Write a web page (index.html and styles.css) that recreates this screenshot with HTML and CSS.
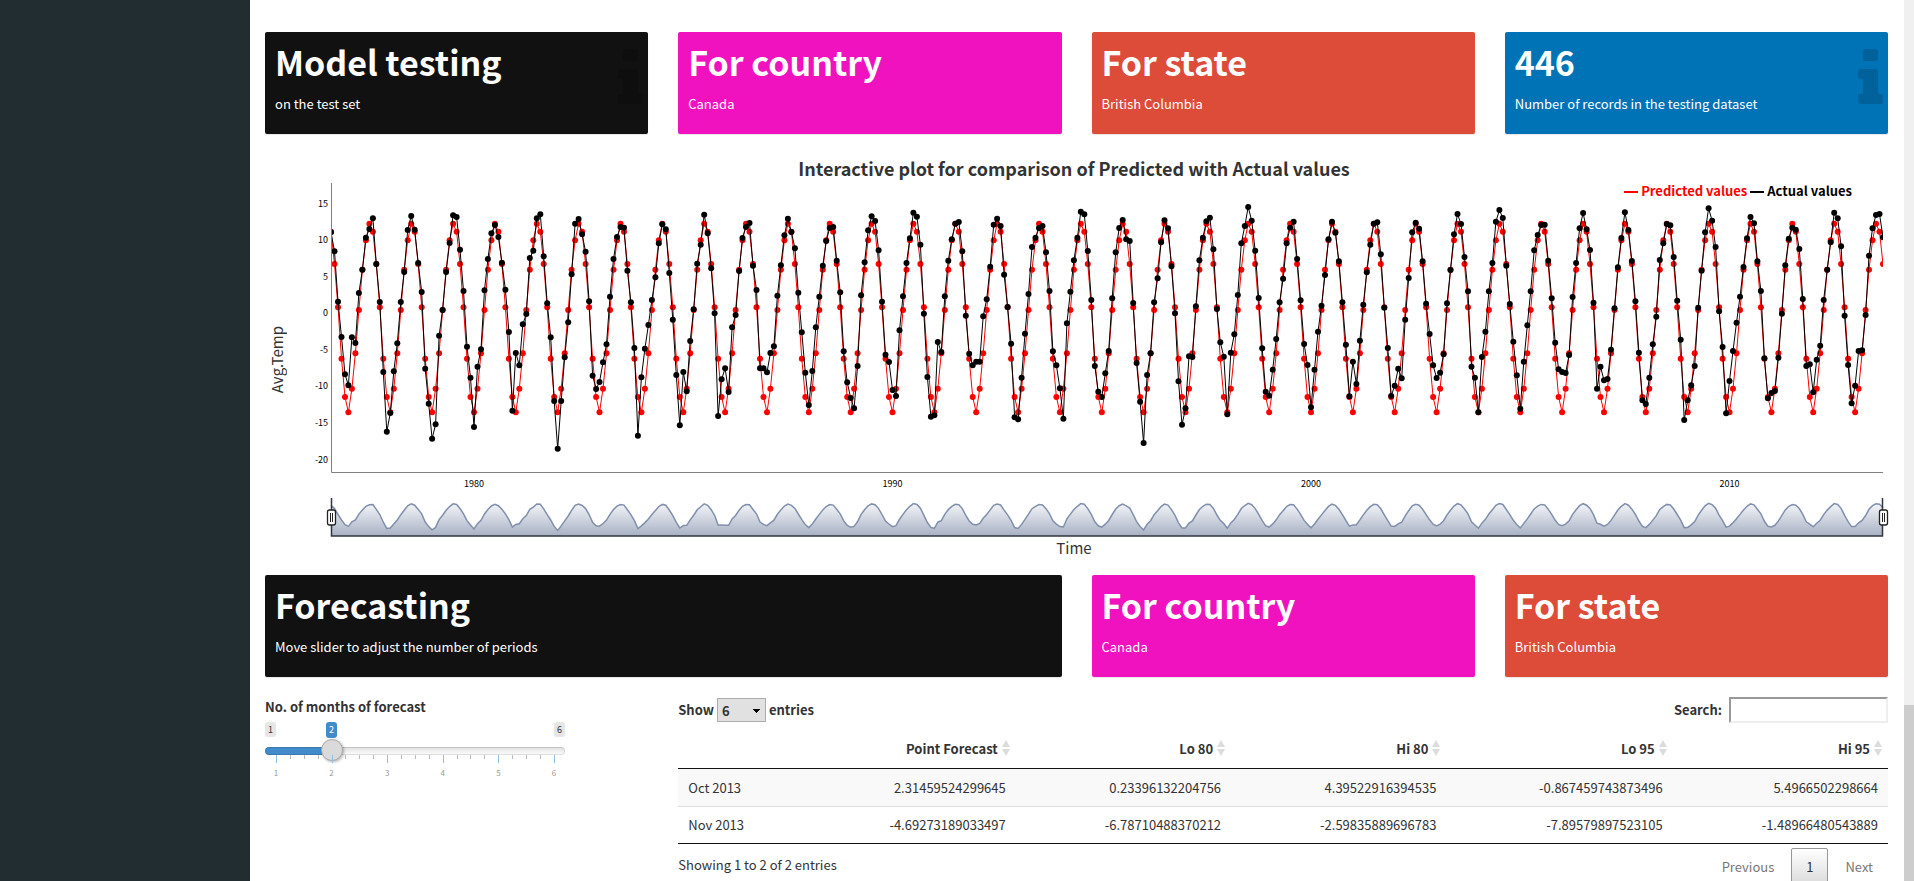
FILE: index.html
```html
<!DOCTYPE html>
<html lang="en">
<head>
<meta charset="utf-8">
<title>Temperature forecasting</title>
<link rel="stylesheet" href="styles.css">
</head>
<body>
<aside class="sidebar"></aside>
<main class="content">
  <section class="boxes">
    <div class="box box-black">
      <h3>Model testing</h3><p>on the test set</p>
      <svg class="box-icon" viewBox="0 0 25 55"><path d="M7 0h11q2 0 2 2v8q0 2-2 2H7q-2 0-2-2V2q0-2 2-2zM2 20h16q2 0 2 2v23h3q2 0 2 2v6q0 2-2 2H2q-2 0-2-2v-6q0-2 2-2h3V30H2q-2 0-2-2v-6q0-2 2-2z"/></svg>
    </div>
    <div class="box box-pink"><h3>For country</h3><p>Canada</p></div>
    <div class="box box-red"><h3>For state</h3><p>British Columbia</p></div>
    <div class="box box-blue">
      <h3>446</h3><p>Number of records in the testing dataset</p>
      <svg class="box-icon" viewBox="0 0 25 55"><path d="M7 0h11q2 0 2 2v8q0 2-2 2H7q-2 0-2-2V2q0-2 2-2zM2 20h16q2 0 2 2v23h3q2 0 2 2v6q0 2-2 2H2q-2 0-2-2v-6q0-2 2-2h3V30H2q-2 0-2-2v-6q0-2 2-2z"/></svg>
    </div>
  </section>

  <section class="chart">
    <h4 class="chart-title">Interactive plot for comparison of Predicted with Actual values</h4>
    <div class="chart-ylabel"><span>Avg.Temp</span></div>
    <div class="chart-plot" id="plot"></div>
    <div class="chart-legend"><span class="key key-red"></span><span class="name-red">Predicted values</span><span class="key key-black"></span><span>Actual values</span></div>
    <div class="chart-xlabel">Time</div>
  </section>

  <section class="boxes">
    <div class="box box-black box-wide"><h3>Forecasting</h3><p>Move slider to adjust the number of periods</p></div>
    <div class="box box-pink"><h3>For country</h3><p>Canada</p></div>
    <div class="box box-red"><h3>For state</h3><p>British Columbia</p></div>
  </section>

  <section class="forecast">
    <div class="periods">
      <label for="months">No. of months of forecast</label>
      <div class="bounds"><span>1</span><output class="current" for="months">2</output><span>6</span></div>
      <input type="range" id="months" min="1" max="6" step="1" value="2">
      <div class="ticks" id="ticks"></div>
      <div class="tick-names"><span>1</span><span>2</span><span>3</span><span>4</span><span>5</span><span>6</span></div>
    </div>
    <div class="table-wrap">
      <div class="table-tools">
        <label class="length">Show <select><option>6</option><option>12</option></select> entries</label>
        <label class="search">Search: <input type="search"></label>
      </div>
      <table>
        <colgroup><col class="c-name"><col class="c-a"><col class="c-b"><col class="c-b"><col class="c-c"><col class="c-b"></colgroup>
        <thead><tr><th></th><th>Point Forecast</th><th>Lo 80</th><th>Hi 80</th><th>Lo 95</th><th>Hi 95</th></tr></thead>
        <tbody>
          <tr><td>Oct 2013</td><td>2.31459524299645</td><td>0.23396132204756</td><td>4.39522916394535</td><td>-0.867459743873496</td><td>5.4966502298664</td></tr>
          <tr><td>Nov 2013</td><td>-4.69273189033497</td><td>-6.78710488370212</td><td>-2.59835889696783</td><td>-7.89579897523105</td><td>-1.48966480543889</td></tr>
        </tbody>
      </table>
      <div class="table-foot">
        <span>Showing 1 to 2 of 2 entries</span>
        <nav class="pages"><button type="button">Previous</button><button type="button" class="on">1</button><button type="button">Next</button></nav>
      </div>
    </div>
  </section>
</main>
<div class="scrollbar"><div class="thumb"></div></div>
<script src="chart.js"></script>
</body>
</html>
```

FILE: styles.css
```css
* { box-sizing: border-box; }
body {
  margin: 0;
  display: flex;
  height: 100vh;
  overflow: hidden;
  background: #fff;
  color: #333;
  font: 13px/20px "Noto Sans CJK SC", "Open Sans", sans-serif;
}
h3, h4, p { margin: 0; }
.sidebar { flex: 0 0 250px; background: #222d32; }
.content { flex: 1; min-width: 0; padding: 32px 16px 0 15px; overflow: hidden; }
.scrollbar { flex: 0 0 10px; background: #f0f0f0; display: flex; align-items: flex-end; }
.thumb { width: 100%; height: 20%; background: #cdcdcd; }

.boxes { display: grid; grid-template-columns: repeat(4, minmax(0, 1fr)); gap: 30px; }
.box {
  position: relative;
  height: 102px;
  padding: 10px;
  border-radius: 2px;
  color: #fff;
  box-shadow: 0 1px 1px rgba(0, 0, 0, .1);
}
.box h3 { margin-bottom: 11px; font-size: 34px; line-height: 40px; font-weight: bold; white-space: nowrap; }
.box p { font-size: 13px; line-height: 21px; }
.box-wide { grid-column: span 2; }
.box-black { background: #111; }
.box-pink { background: #f012be; }
.box-red { background: #dd4b39; }
.box-blue { background: #0073b7; }
.box-icon { position: absolute; right: 5px; top: 17px; width: 25px; height: 55px; fill: rgba(0, 0, 0, .15); }

.chart {
  position: relative;
  display: grid;
  grid-template: 28px 354px 24px / 24px 1fr;
  margin: 21px 0 14px;
  padding-right: 5px;
}
.chart-title { grid-column: 1 / 3; font-size: 18px; line-height: 26px; text-align: center; font-weight: bold; }
.chart-ylabel { display: flex; align-items: center; justify-content: center; }
.chart-ylabel span { writing-mode: vertical-rl; transform: rotate(180deg); font-size: 15px; line-height: 24px; }
.chart-plot { min-width: 0; }
.chart-plot svg { display: block; overflow: visible; }
.chart-plot text { font-size: 9px; fill: #000; }
.chart-xlabel { grid-column: 1 / 3; text-align: center; font-size: 15px; line-height: 22px; }
.chart-legend {
  position: absolute;
  right: 36px;
  top: 26px;
  display: flex;
  align-items: center;
  font-weight: bold;
  color: #000;
}
.key { width: 14px; height: 2px; margin: 2px 3px 0; }
.key-red { background: #f00; }
.key-black { background: #000; }
.name-red { color: #f00; }

.forecast { display: grid; grid-template-columns: repeat(4, minmax(0, 1fr)); gap: 30px; padding-top: 20px; }
.periods { width: 300px; }
.periods label { display: block; font-weight: bold; line-height: 20px; margin-bottom: 5px; }
.bounds { position: relative; display: flex; justify-content: space-between; font-size: 9px; line-height: 15px; }
.bounds span { width: 11px; text-align: center; background: #e6e6e6; border-radius: 3px; }
.current { position: absolute; left: 61px; top: 0; width: 11px; height: 16px; text-align: center; color: #fff; background: #428bca; border-radius: 3px; }
#months { -webkit-appearance: none; appearance: none; display: block; width: 100%; height: 22px; margin: 3px 0 0; background: none; }
#months::-webkit-slider-runnable-track {
  height: 8px;
  border-radius: 8px;
  background: linear-gradient(90deg, #428bca 22%, transparent 22%), linear-gradient(#dedede, #fff);
  box-shadow: inset 0 0 0 1px rgba(0, 0, 0, .12);
}
#months::-webkit-slider-thumb {
  -webkit-appearance: none;
  width: 22px;
  height: 22px;
  margin-top: -8px;
  border: 1px solid #aaa;
  border-radius: 50%;
  background: #dadada;
  box-shadow: 1px 1px 3px rgba(0, 0, 0, .3);
}
.ticks { display: flex; justify-content: space-between; height: 8px; margin: -7px 11px 0; }
.ticks i { width: 1px; height: 4px; margin-right: -1px; background: #bbb; }
.ticks i.major { height: 8px; background: #99bfdf; }
.tick-names { display: flex; justify-content: space-between; margin: 2px 6px 0; font-size: 8px; line-height: 16px; color: #999; }
.tick-names span { width: 10px; text-align: center; }

.table-wrap { grid-column: 2 / 5; }
.table-tools { display: flex; justify-content: space-between; font-weight: bold; height: 32px; }
.table-tools label { display: flex; align-items: center; height: 26px; gap: 3px; }
.table-tools select {
  -webkit-appearance: none;
  appearance: none;
  width: 49px;
  height: 24px;
  padding: 0 4px;
  border: 1px solid #adadad;
  border-radius: 0;
  background: linear-gradient(to bottom left, #000 50%, transparent 50%) 35px 10px / 4px 4px no-repeat, linear-gradient(to bottom right, #000 50%, transparent 50%) 39px 10px / 4px 4px no-repeat, #e1e1e1;
  color: #333;
  font: bold 13px "Noto Sans CJK SC", "Open Sans", sans-serif;
}
.table-tools .search { gap: 7px; }
.table-tools input { width: 159px; height: 26px; border: 2px solid; border-color: #999 #eee #eee #999; border-radius: 0; background: #fff; }
table { width: 100%; border-collapse: separate; border-spacing: 0; table-layout: fixed; border-bottom: 1px solid #111; }
.c-name { width: 10.3%; }
.c-a { width: 17.6%; }
.c-b { width: 17.8%; }
.c-c { width: 18.7%; }
th, td { text-align: right; white-space: nowrap; }
th { position: relative; height: 40px; padding: 0 18px 0 0; border-bottom: 1px solid #111; font-weight: bold; }
th:not(:first-child)::before, th:not(:first-child)::after { content: ""; position: absolute; right: 6px; border: 4px solid transparent; }
th::before { top: 7px; border-bottom: 7px solid #dcdcdc !important; }
th::after { top: 20px; border-top: 7px solid #dcdcdc !important; }
td { height: 37px; padding: 0 10px; }
td:first-child { text-align: left; }
tbody tr:first-child td { background: #f9f9f9; }
tbody tr + tr td { border-top: 1px solid #ddd; }
.table-foot { display: flex; justify-content: space-between; line-height: 20px; padding-top: 4px; }
.table-foot > span { padding-top: 7px; }
.pages { display: flex; gap: 2px; }
.pages button { height: 36px; padding: 0 14px; border: 1px solid transparent; border-radius: 2px; background: none; color: #777; font: 13px "Noto Sans CJK SC", "Open Sans", sans-serif; }
.pages .on { color: #333; border-color: #979797; background: linear-gradient(#fff, #dcdcdc); }
```

FILE: chart.js
```js
// Series are in plot units: three per pixel, y growing downwards, zero degrees at 427.
const season = [182, 279, 409, 563, 678, 724, 653, 547, 417, 296, 208, 158];
const actual = [
  184,241,392,498,610,643,499,516,366,296,200,174,
  142,279,393,603,782,726,601,517,393,303,177,135,
  176,276,363,593,698,803,760,494,417,303,216,133,
  138,236,360,527,620,768,587,535,358,264,187,162,
  198,275,356,483,719,546,583,460,429,261,239,142,
  130,256,397,499,690,833,690,559,454,310,158,144,
  190,242,391,614,654,633,574,520,377,264,198,168,
  170,299,394,531,794,619,533,462,387,319,217,160,
  175,306,446,612,763,603,661,510,415,278,221,131,
  187,292,427,735,625,592,663,469,432,300,201,168,
  156,284,357,592,592,604,546,526,374,283,193,143,
  183,232,365,484,605,702,600,469,377,284,210,171,
  168,269,364,541,634,681,712,585,373,274,178,136,
  150,238,392,551,573,657,675,478,376,276,202,125,
  137,221,428,618,737,733,513,543,376,269,205,158,
  153,241,434,548,583,572,572,436,385,287,161,143,
  165,311,408,518,739,745,620,488,369,228,200,171,
  165,244,360,541,583,652,743,457,362,268,200,122,
  130,240,387,585,662,678,607,540,382,244,171,147,
  205,210,396,576,692,816,612,547,394,322,214,148,
  172,286,427,631,761,712,556,558,406,268,200,151,
  140,235,414,514,557,730,545,490,372,217,165,108,
  149,239,381,532,662,674,596,504,394,323,217,170,
  152,264,388,519,582,709,596,482,404,312,205,152,
  185,271,394,521,676,572,639,509,401,304,221,158,
  154,250,410,531,675,644,593,622,446,321,184,155,
  173,271,398,489,583,621,605,550,397,297,190,129,
  159,258,361,587,620,724,558,482,361,276,152,117,
  141,284,399,512,613,713,572,463,361,238,192,162,
  161,269,382,515,595,603,606,552,378,276,172,126,
  175,237,395,653,587,628,624,536,412,289,201,124,
  177,270,391,545,688,699,620,520,437,267,217,159,
  163,258,389,506,747,688,643,585,410,299,184,112,
  149,228,421,528,727,630,540,455,377,288,202,138,
  157,271,360,562,682,666,660,560,428,283,203,170,
  176,234,384,585,580,664,566,524,387,296,214,125,
  142,226,434,582,697,644,540,538,432,254,172,132,
  129,199
];
const predicted = actual.map((_, i) => season[i % 12]);
const plot = document.getElementById('plot');

function draw() {
  const w = plot.clientWidth, left = 42, right = w;
  const step = (right - left) / (actual.length - 1);
  const x = i => left + i * step;
  const y = v => v / 3 - 12;
  const line = (s, f) => s.map((v, i) => x(i).toFixed(1) + ',' + f(v).toFixed(1)).join(' ');
  const series = (s, c) => `<polyline points="${line(s, y)}" fill="none" stroke="${c}"/>` +
    s.map((v, i) => `<circle cx="${x(i).toFixed(1)}" cy="${y(v).toFixed(1)}" r="3" fill="${c}"/>`).join('');
  const mid = actual.map((v, i) => (v + predicted[i]) / 2);
  const mini = line(mid, v => 321 + (v - 150) * 0.042);
  let out = `<defs><clipPath id="area"><rect x="${left}" y="0" width="${right - left}" height="290"/></clipPath>
    <linearGradient id="fade" x1="0" y1="0" x2="0" y2="1"><stop stop-color="#f4f5f8"/><stop offset="1" stop-color="#a7b1c4"/></linearGradient></defs>`;
  out += `<g clip-path="url(#area)">${series(predicted, '#f00')}${series(actual, '#000')}</g>`;
  out += `<path d="M${left + .5} 0V289.500H${right}" fill="none" stroke="#808080"/>`;
  for (let t = 15; t >= -20; t -= 5) {
    out += `<text x="${left - 3}" y="${y(427 - t * 21.94) + 3}" text-anchor="end">${t}</text>`;
  }
  [1980, 1990, 2000, 2010].forEach((n, k) => {
    out += `<text x="${x(41 + 120 * k)}" y="304" text-anchor="middle">${n}</text>`;
  });
  out += `<polygon points="${left},353 ${mini} ${right},353" fill="url(#fade)"/>
    <polyline points="${mini}" fill="none" stroke="#808fab" stroke-width="1.500"/>
    <path d="M${left + .5} 315V353H${right - .5}V315" fill="none" stroke="#333640" stroke-width="1.500"/>`;
  for (const h of [left + .5, right + .5]) {
    out += `<rect x="${h - 4}" y="327" width="8" height="15" rx="2" fill="#fff" stroke="#222" stroke-width="1.300"/>
      <path d="M${h - 1} 330v9M${h + 1} 330v9" stroke="#222"/>`;
  }
  plot.innerHTML = `<svg width="${w}" height="354">${out}</svg>`;
}
draw();
addEventListener('resize', draw);
document.getElementById('ticks').innerHTML =
  Array.from({ length: 21 }, (_, i) => `<i${i % 4 ? '' : ' class="major"'}></i>`).join('');
```
